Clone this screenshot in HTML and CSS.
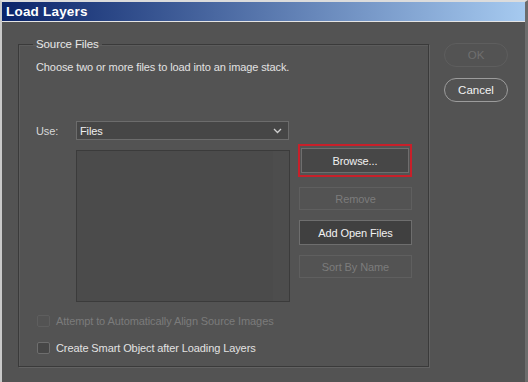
FILE: index.html
```html
<!DOCTYPE html>
<html lang="en">
<head>
  <meta charset="UTF-8">
  <title>Load Layers</title>
  <link rel="stylesheet" href="styles.css">
</head>
<body>
  <div class="window">
    <div class="titlebar">Load Layers</div>
    <div class="client">
      <fieldset class="group">
        <legend>Source Files</legend>
        <p class="hint">Choose two or more files to load into an image stack.</p>

        <div class="use-row">
          <span class="use-label">Use:</span>
          <div class="select">
            <span>Files</span>
            <svg class="chevron" width="9" height="6" viewBox="0 0 9 6">
              <polyline points="1,1 4.5,4.5 8,1" fill="none" stroke="#cfcfcf" stroke-width="1.3"/>
            </svg>
          </div>
        </div>

        <div class="files-row">
          <div class="file-list"></div>
          <div class="file-actions">
            <div class="focus-ring"><button class="btn">Browse...</button></div>
            <button class="btn" disabled>Remove</button>
            <button class="btn btn-dark">Add Open Files</button>
            <button class="btn" disabled>Sort By Name</button>
          </div>
        </div>

        <label class="check is-disabled"><span class="box"></span>Attempt to Automatically Align Source Images</label>
        <label class="check"><span class="box"></span>Create Smart Object after Loading Layers</label>
      </fieldset>

      <div class="dialog-actions">
        <button class="pill" disabled>OK</button>
        <button class="pill">Cancel</button>
      </div>
    </div>
  </div>
</body>
</html>
```

FILE: styles.css
```css
body {
  margin: 0;
  padding: 0;
  background: #535353;
  font-family: 'Liberation Sans', Arial, sans-serif;
  font-size: 11px;
  letter-spacing: -0.1px;
  color: #e2e2e2;
}
.window {
  width: 528px;
  height: 382px;
  box-sizing: border-box;
  border-top: 2px solid #dcdcdc;
  border-left: 2px solid #c9c9c9;
  border-right: 3px solid #6c6c6c;
  background: #535353;
  overflow: hidden;
}
.titlebar {
  height: 19px;
  line-height: 19px;
  padding-left: 4px;
  background: linear-gradient(to right, #0a246a, #a6caf0);
  color: #fff;
  font-weight: bold;
  font-size: 13.5px;
  letter-spacing: 0.2px;
  border-bottom: 1px solid #e4e4e4;
}
.client {
  display: flex;
  align-items: flex-start;
  padding-left: 16px;
}

/* group box */
.group {
  width: 411px;
  box-sizing: border-box;
  margin: 15px 0 0 0;
  padding: 9px 0 11px 17px;
  border: 1px solid #3a3a3a;
  box-shadow: 1px 1px 0 #626262, inset 1px 1px 0 #5c5c5c;
  min-width: 0;
}
.group legend {
  padding: 0 3px;
  margin-left: -3px;
  line-height: 14px;
  font-size: 11.5px;
  color: #e8e8e8;
}
.hint {
  margin: 0;
  line-height: 14px;
}
.use-row {
  display: flex;
  align-items: center;
  margin-top: 47px;
}
.use-label {
  width: 40px;
  color: #d8d8d8;
}
.select {
  width: 213px;
  height: 19px;
  box-sizing: border-box;
  display: flex;
  align-items: center;
  justify-content: space-between;
  padding: 0 6px 0 3px;
  background: #464646;
  border: 1px solid #6c6c6c;
  color: #f0f0f0;
}
.chevron { display: block; }

.files-row {
  display: flex;
  align-items: flex-start;
  gap: 9px;
  margin-top: 4px;
  padding-left: 40px;
}
.file-list {
  width: 214px;
  height: 152px;
  box-sizing: border-box;
  margin-top: 6px;
  border: 1px solid #3b3b3b;
  background: linear-gradient(to right, #4b4b4b 196px, #4d4d4d 196px);
}
.file-actions {
  width: 113px;
  display: flex;
  flex-direction: column;
  gap: 10px;
}
.focus-ring {
  border: 2px solid #c8202a;
  padding: 2px 1px;
  margin: 0 0 0 -1px;
}
.btn {
  display: block;
  width: 100%;
  height: 23px;
  box-sizing: border-box;
  background: #474747;
  border: 1px solid #6e6e6e;
  color: #f2f2f2;
  font-family: inherit;
  font-size: 11px;
  letter-spacing: inherit;
  padding: 0;
}
.focus-ring .btn { height: 25px; }
.btn-dark { height: 25px; background: #404040; }
.btn:disabled {
  background: #535353;
  border-color: #5f5f5f;
  color: #7c7c7c;
}

.check {
  display: flex;
  align-items: center;
  line-height: 14px;
  margin-top: 12px;
}
.check + .check { margin-top: 13px; }
.check .box {
  width: 13px;
  height: 12px;
  box-sizing: border-box;
  margin: 0 6px 0 1px;
  border: 1px solid #6e6e6e;
  border-radius: 2px;
  background: #474747;
}
.check.is-disabled { color: #7b7b7b; }
.check.is-disabled .box {
  border-color: #5e5e5e;
  background: #535353;
}

/* right column */
.dialog-actions {
  margin: 21px 0 0 15px;
  display: flex;
  flex-direction: column;
  gap: 11px;
  width: 64px;
}
.pill {
  height: 24px;
  border-radius: 12px;
  background: #535353;
  border: 1px solid #9c9c9c;
  color: #f2f2f2;
  font-family: inherit;
  font-size: 11.5px;
  padding: 0;
}
.pill:disabled {
  border-color: #5e5e5e;
  color: #6f6f6f;
}
```
